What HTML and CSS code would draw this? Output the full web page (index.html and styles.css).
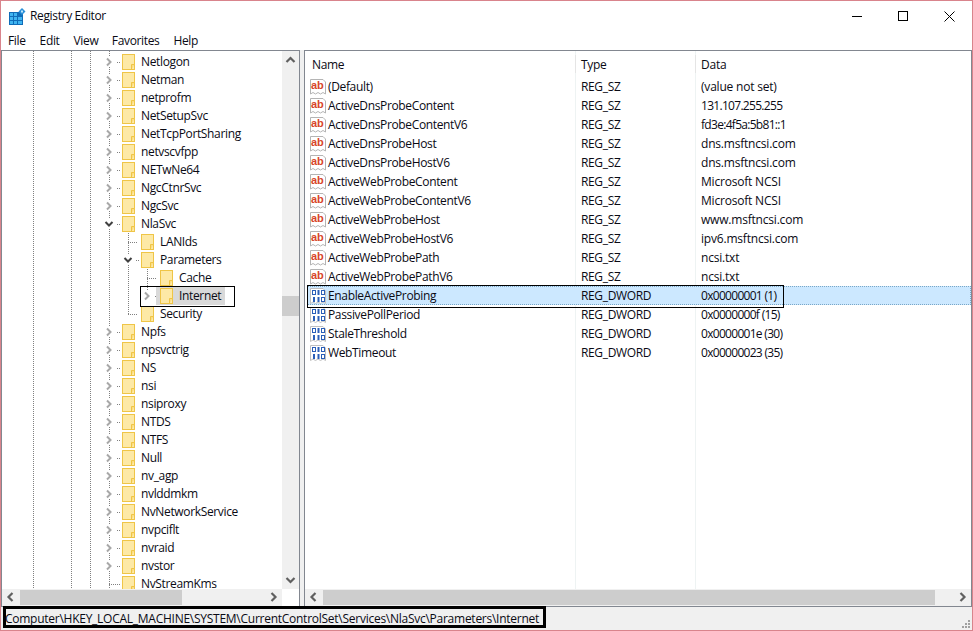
FILE: index.html
```html
<!DOCTYPE html>
<html lang="en">
<head>
<meta charset="utf-8">
<title>Registry Editor</title>
<link rel="stylesheet" href="styles.css">
</head>
<body>
<svg class="sprite" width="0" height="0" aria-hidden="true">
  <symbol id="folder" viewBox="0 0 13 16">
    <rect x="0.5" y="0.5" width="12" height="15" fill="#fde9a6" stroke="#efc547"/>
    <path d="M9.5 15.500v-5h3" fill="#fbdc80" stroke="#efc547"/>
  </symbol>
  <symbol id="tw-right" viewBox="0 0 18 18">
    <rect x="1" y="4" width="10" height="10" fill="#fff"/>
    <path d="M3 5.500l3.500 3.500-3.500 3.500" fill="none" stroke="#a8a8a8" stroke-width="2"/>
    <path d="M13 9.500h3" stroke="#808080" stroke-dasharray="1 1"/>
  </symbol>
  <symbol id="tw-down" viewBox="0 0 18 18">
    <rect x="1" y="4" width="10" height="10" fill="#fff"/>
    <path d="M1.500 7l3.500 3.500 3.500-3.500" fill="none" stroke="#404040" stroke-width="2"/>
    <path d="M13 9.500h3" stroke="#808080" stroke-dasharray="1 1"/>
  </symbol>
  <symbol id="ab" viewBox="0 0 16 18">
    <path d="M0.500 1.500h12.500l2.500 2.500v12l-2.500-1.500-2.500 1.500-2.500-1.500-2.500 1.500-2.500-1.500-2.500 1.500z" fill="#fff" stroke="#b4b4b4"/>
    <text x="1" y="11" class="abtext">ab</text>
  </symbol>
  <symbol id="bin" viewBox="0 0 16 18">
    <path d="M0.500 1.500h12.500l2.500 2.500v12.500l-2.500-1.500-2.500 1.500-2.500-1.500-2.500 1.500-2.500-1.500-2.500 1.500z" fill="#fff" stroke="#c0c0c0"/>
    <g fill="none" stroke="#2b5fb8">
      <rect x="2.500" y="3.500" width="3" height="4"/>
      <path d="M8.500 3v5" stroke-width="2"/>
      <rect x="11.500" y="3.500" width="3" height="4"/>
      <path d="M4 10v5M8.500 10v5" stroke-width="2"/>
      <rect x="11.500" y="10.500" width="3" height="4"/>
    </g>
  </symbol>
  <symbol id="arr-up" viewBox="0 0 17 17"><path d="M4.500 11l4-4 4 4" fill="none" stroke="#606060" stroke-width="2.200"/></symbol>
  <symbol id="arr-down" viewBox="0 0 17 17"><path d="M4.500 6l4 4 4-4" fill="none" stroke="#606060" stroke-width="2.200"/></symbol>
  <symbol id="arr-left" viewBox="0 0 17 17"><path d="M10.500 4l-4 4 4 4" fill="none" stroke="#606060" stroke-width="2.200"/></symbol>
  <symbol id="arr-right" viewBox="0 0 17 17"><path d="M6.500 4l4 4-4 4" fill="none" stroke="#606060" stroke-width="2.200"/></symbol>
</svg>

<div class="window">
  <header class="titlebar">
    <svg class="appicon" width="17" height="17" viewBox="0 0 17 17">
      <rect x="0" y="4" width="14" height="13" fill="#0f6cb8"/>
      <path d="M1 5h3v3H1zM5 5h3v3H5zM1 9h3v3H1zM5 9h3v3H5zM9 9h4v3H9zM1 13h3v3H1zM5 13h3v3H5zM9 13h4v3H9z" fill="#3fb4f0"/>
      <path d="M13 0l3.500 3.500L13 7 9.500 3.500z" fill="#2a8fd8"/>
      <rect x="12" y="2.500" width="2" height="2" fill="#bfe6fa"/>
    </svg>
    <span class="title">Registry Editor</span>
    <div class="controls">
      <span class="ctl"><svg width="11" height="11" viewBox="0 0 11 11"><path d="M0 5.500h10" stroke="#000" fill="none"/></svg></span>
      <span class="ctl"><svg width="11" height="11" viewBox="0 0 11 11"><rect x="0.500" y="0.500" width="9" height="9" fill="none" stroke="#000"/></svg></span>
      <span class="ctl"><svg width="11" height="11" viewBox="0 0 11 11"><path d="M0.500 0.500l10 10M10.500 0.500l-10 10" stroke="#000" fill="none"/></svg></span>
    </div>
  </header>
  <nav class="menubar">
    <span class="menu">File</span>
    <span class="menu">Edit</span>
    <span class="menu m-view">View</span>
    <span class="menu">Favorites</span>
    <span class="menu">Help</span>
  </nav>

  <main class="panes">
    <section class="pane treepane">
      <div class="tree">
        <svg class="guides" width="280" height="538" viewBox="0 0 280 538">
          <path d="M31.500 0v538M69.500 0v538M88.500 0v538M107.500 0v538M126.500 182v81M126 191.500h10M126 263.500h10M145.500 218v27M145 227.500h10M107 533.500h11" stroke="#808080" stroke-dasharray="1 1" fill="none"/>
        </svg>
        <div class="rows">
          <div class="row"><svg class="tw"><use href="#tw-right"/></svg><span class="node"><svg class="fold"><use href="#folder"/></svg><span class="lbl">Netlogon</span></span></div>
          <div class="row"><svg class="tw"><use href="#tw-right"/></svg><span class="node"><svg class="fold"><use href="#folder"/></svg><span class="lbl">Netman</span></span></div>
          <div class="row"><svg class="tw"><use href="#tw-right"/></svg><span class="node"><svg class="fold"><use href="#folder"/></svg><span class="lbl">netprofm</span></span></div>
          <div class="row"><svg class="tw"><use href="#tw-right"/></svg><span class="node"><svg class="fold"><use href="#folder"/></svg><span class="lbl">NetSetupSvc</span></span></div>
          <div class="row"><svg class="tw"><use href="#tw-right"/></svg><span class="node"><svg class="fold"><use href="#folder"/></svg><span class="lbl">NetTcpPortSharing</span></span></div>
          <div class="row"><svg class="tw"><use href="#tw-right"/></svg><span class="node"><svg class="fold"><use href="#folder"/></svg><span class="lbl">netvscvfpp</span></span></div>
          <div class="row"><svg class="tw"><use href="#tw-right"/></svg><span class="node"><svg class="fold"><use href="#folder"/></svg><span class="lbl">NETwNe64</span></span></div>
          <div class="row"><svg class="tw"><use href="#tw-right"/></svg><span class="node"><svg class="fold"><use href="#folder"/></svg><span class="lbl">NgcCtnrSvc</span></span></div>
          <div class="row"><svg class="tw"><use href="#tw-right"/></svg><span class="node"><svg class="fold"><use href="#folder"/></svg><span class="lbl">NgcSvc</span></span></div>
          <div class="row"><svg class="tw"><use href="#tw-down"/></svg><span class="node"><svg class="fold"><use href="#folder"/></svg><span class="lbl">NlaSvc</span></span></div>
          <div class="row l2"><span class="tw"></span><span class="node"><svg class="fold"><use href="#folder"/></svg><span class="lbl">LANIds</span></span></div>
          <div class="row l2"><svg class="tw"><use href="#tw-down"/></svg><span class="node"><svg class="fold"><use href="#folder"/></svg><span class="lbl">Parameters</span></span></div>
          <div class="row l3"><span class="tw"></span><span class="node"><svg class="fold"><use href="#folder"/></svg><span class="lbl">Cache</span></span></div>
          <div class="row l3 current"><svg class="tw"><use href="#tw-right"/></svg><span class="node sel"><svg class="fold"><use href="#folder"/></svg><span class="lbl">Internet</span></span></div>
          <div class="row l2"><span class="tw"></span><span class="node"><svg class="fold"><use href="#folder"/></svg><span class="lbl">Security</span></span></div>
          <div class="row"><svg class="tw"><use href="#tw-right"/></svg><span class="node"><svg class="fold"><use href="#folder"/></svg><span class="lbl">Npfs</span></span></div>
          <div class="row"><svg class="tw"><use href="#tw-right"/></svg><span class="node"><svg class="fold"><use href="#folder"/></svg><span class="lbl">npsvctrig</span></span></div>
          <div class="row"><svg class="tw"><use href="#tw-right"/></svg><span class="node"><svg class="fold"><use href="#folder"/></svg><span class="lbl">NS</span></span></div>
          <div class="row"><svg class="tw"><use href="#tw-right"/></svg><span class="node"><svg class="fold"><use href="#folder"/></svg><span class="lbl">nsi</span></span></div>
          <div class="row"><svg class="tw"><use href="#tw-right"/></svg><span class="node"><svg class="fold"><use href="#folder"/></svg><span class="lbl">nsiproxy</span></span></div>
          <div class="row"><svg class="tw"><use href="#tw-right"/></svg><span class="node"><svg class="fold"><use href="#folder"/></svg><span class="lbl">NTDS</span></span></div>
          <div class="row"><svg class="tw"><use href="#tw-right"/></svg><span class="node"><svg class="fold"><use href="#folder"/></svg><span class="lbl">NTFS</span></span></div>
          <div class="row"><svg class="tw"><use href="#tw-right"/></svg><span class="node"><svg class="fold"><use href="#folder"/></svg><span class="lbl">Null</span></span></div>
          <div class="row"><svg class="tw"><use href="#tw-right"/></svg><span class="node"><svg class="fold"><use href="#folder"/></svg><span class="lbl">nv_agp</span></span></div>
          <div class="row"><svg class="tw"><use href="#tw-right"/></svg><span class="node"><svg class="fold"><use href="#folder"/></svg><span class="lbl">nvlddmkm</span></span></div>
          <div class="row"><svg class="tw"><use href="#tw-right"/></svg><span class="node"><svg class="fold"><use href="#folder"/></svg><span class="lbl">NvNetworkService</span></span></div>
          <div class="row"><svg class="tw"><use href="#tw-right"/></svg><span class="node"><svg class="fold"><use href="#folder"/></svg><span class="lbl">nvpciflt</span></span></div>
          <div class="row"><svg class="tw"><use href="#tw-right"/></svg><span class="node"><svg class="fold"><use href="#folder"/></svg><span class="lbl">nvraid</span></span></div>
          <div class="row"><svg class="tw"><use href="#tw-right"/></svg><span class="node"><svg class="fold"><use href="#folder"/></svg><span class="lbl">nvstor</span></span></div>
          <div class="row"><span class="tw"></span><span class="node"><svg class="fold"><use href="#folder"/></svg><span class="lbl">NvStreamKms</span></span></div>
        </div>
      </div>
      <div class="vbar">
        <svg class="arr"><use href="#arr-up"/></svg>
        <div class="vtrack"><div class="vthumb"></div></div>
        <svg class="arr"><use href="#arr-down"/></svg>
      </div>
      <div class="hbar">
        <svg class="arr"><use href="#arr-left"/></svg>
        <div class="htrack"><div class="hthumb tree-thumb"></div></div>
        <svg class="arr"><use href="#arr-right"/></svg>
      </div>
      <div class="corner"></div>
    </section>

    <section class="pane listpane">
      <div class="list">
        <div class="lhead">
          <span class="col-name head-name">Name</span>
          <span class="col-type">Type</span>
          <span class="col-data">Data</span>
        </div>
        <div class="lrow"><span class="col-name"><svg class="ic"><use href="#ab"/></svg>(Default)</span><span class="col-type">REG_SZ</span><span class="col-data">(value not set)</span></div>
        <div class="lrow"><span class="col-name"><svg class="ic"><use href="#ab"/></svg>ActiveDnsProbeContent</span><span class="col-type">REG_SZ</span><span class="col-data num">131.107.255.255</span></div>
        <div class="lrow"><span class="col-name"><svg class="ic"><use href="#ab"/></svg>ActiveDnsProbeContentV6</span><span class="col-type">REG_SZ</span><span class="col-data num">fd3e:4f5a:5b81::1</span></div>
        <div class="lrow"><span class="col-name"><svg class="ic"><use href="#ab"/></svg>ActiveDnsProbeHost</span><span class="col-type">REG_SZ</span><span class="col-data">dns.msftncsi.com</span></div>
        <div class="lrow"><span class="col-name"><svg class="ic"><use href="#ab"/></svg>ActiveDnsProbeHostV6</span><span class="col-type">REG_SZ</span><span class="col-data">dns.msftncsi.com</span></div>
        <div class="lrow"><span class="col-name"><svg class="ic"><use href="#ab"/></svg>ActiveWebProbeContent</span><span class="col-type">REG_SZ</span><span class="col-data">Microsoft NCSI</span></div>
        <div class="lrow"><span class="col-name"><svg class="ic"><use href="#ab"/></svg>ActiveWebProbeContentV6</span><span class="col-type">REG_SZ</span><span class="col-data">Microsoft NCSI</span></div>
        <div class="lrow"><span class="col-name"><svg class="ic"><use href="#ab"/></svg>ActiveWebProbeHost</span><span class="col-type">REG_SZ</span><span class="col-data">www.msftncsi.com</span></div>
        <div class="lrow"><span class="col-name"><svg class="ic"><use href="#ab"/></svg>ActiveWebProbeHostV6</span><span class="col-type">REG_SZ</span><span class="col-data">ipv6.msftncsi.com</span></div>
        <div class="lrow"><span class="col-name"><svg class="ic"><use href="#ab"/></svg>ActiveWebProbePath</span><span class="col-type">REG_SZ</span><span class="col-data">ncsi.txt</span></div>
        <div class="lrow"><span class="col-name"><svg class="ic"><use href="#ab"/></svg>ActiveWebProbePathV6</span><span class="col-type">REG_SZ</span><span class="col-data">ncsi.txt</span></div>
        <div class="lrow selected"><span class="col-name"><svg class="ic"><use href="#bin"/></svg>EnableActiveProbing</span><span class="col-type">REG_DWORD</span><span class="col-data num">0x00000001 (1)</span></div>
        <div class="lrow"><span class="col-name"><svg class="ic"><use href="#bin"/></svg>PassivePollPeriod</span><span class="col-type">REG_DWORD</span><span class="col-data num">0x0000000f (15)</span></div>
        <div class="lrow"><span class="col-name"><svg class="ic"><use href="#bin"/></svg>StaleThreshold</span><span class="col-type">REG_DWORD</span><span class="col-data num">0x0000001e (30)</span></div>
        <div class="lrow"><span class="col-name"><svg class="ic"><use href="#bin"/></svg>WebTimeout</span><span class="col-type">REG_DWORD</span><span class="col-data num">0x00000023 (35)</span></div>
      </div>
      <div class="hbar">
        <svg class="arr"><use href="#arr-left"/></svg>
        <div class="htrack"><div class="hthumb list-thumb"></div></div>
        <svg class="arr"><use href="#arr-right"/></svg>
      </div>
    </section>
  </main>

  <footer class="statusbar">
    <span class="path">Computer\HKEY_LOCAL_MACHINE\SYSTEM\CurrentControlSet\Services\NlaSvc\Parameters\Internet</span>
    <svg class="grip" width="9" height="9" viewBox="0 0 9 9"><path d="M6 0h2v2H6zM3 3h2v2H3zM6 3h2v2H6zM0 6h2v2H0zM3 6h2v2H3zM6 6h2v2H6z" fill="#a0a0a0"/></svg>
  </footer>
</div>
</body>
</html>
```
FILE: styles.css
```css
* { box-sizing: border-box; }
html, body { margin: 0; padding: 0; }
body {
  width: 973px;
  height: 631px;
  overflow: hidden;
  font-family: "Open Sans", "Noto Sans", sans-serif;
  font-size: 12px;
  letter-spacing: -0.35px;
  color: #0a0a14;
  background: #fff;
}
.sprite { display: none; }
.abtext { font-family: "Liberation Sans", sans-serif; font-size: 11px; font-weight: 700; letter-spacing: 0; fill: #d8452a; }

.window {
  width: 973px;
  height: 631px;
  border: 1px solid #d9848c;
  display: flex;
  flex-direction: column;
  background: #fff;
}

.titlebar { height: 30px; display: flex; align-items: center; padding-left: 8px; }
.appicon { flex: none; }
.title { margin-left: 4px; margin-bottom: 2px; }
.controls { margin-left: auto; display: flex; }
.ctl { width: 46px; height: 30px; display: flex; align-items: center; justify-content: center; }

.menubar { height: 19px; display: flex; align-items: center; padding-left: 7px; }
.menu { margin-right: 14px; }
.m-view { margin-right: 13.500px; }

.panes { height: 557px; display: flex; gap: 4px; background: #f0f0f0; }
.pane { border: 1px solid #828790; background: #fff; }

.treepane {
  width: 299px;
  display: grid;
  grid-template-columns: 280px 17px;
  grid-template-rows: 538px 17px;
}
.tree { position: relative; overflow: hidden; }
.guides { position: absolute; left: 0; top: 0; }
.rows { position: relative; padding-top: 2px; }
.row { height: 18px; display: flex; align-items: center; padding-left: 102px; white-space: nowrap; }
.row.l2 { padding-left: 121px; }
.row.l3 { padding-left: 140px; }
.tw { width: 18px; height: 18px; flex: none; display: block; }
.node { display: flex; align-items: center; height: 18px; }
.fold { width: 13px; height: 16px; flex: none; }
.lbl { margin-left: 6px; margin-bottom: 1px; }
.node.sel { background: #d9d9d9; margin-left: -4px; padding-left: 4px; padding-right: 4px; }
.current { position: relative; }
.current::after {
  content: "";
  position: absolute;
  left: 138px;
  top: -1px;
  width: 93px;
  height: 19px;
  border: 1px solid #000;
}

.vbar { display: flex; flex-direction: column; background: #f0f0f0; }
.hbar { display: flex; background: #f0f0f0; }
.corner { background: #fff; }
.arr { width: 17px; height: 17px; flex: none; display: block; }
.vtrack { flex: 1; }
.vthumb { margin-top: 228px; height: 20px; background: #cdcdcd; }
.htrack { flex: 1; padding: 1px 0; display: flex; }
.hthumb { background: #cdcdcd; height: 15px; }
.tree-thumb { width: 162px; margin-left: 1px; }
.list-thumb { width: 612px; margin-left: 1px; }

.listpane { flex: 1; display: grid; grid-template-rows: 538px 17px; }
.list {
  overflow: hidden;
  background:
    linear-gradient(#eef3f3, #eef3f3) no-repeat 270px 0 / 1px 100%,
    linear-gradient(#eef3f3, #eef3f3) no-repeat 390px 0 / 1px 100%;
}
.lhead { height: 26px; display: flex; align-items: center; }
.lhead .col-name { padding-left: 7px; }
.lhead .col-name, .lhead .col-type { border-right: 1px solid #e5e5e5; height: 18px; display: flex; align-items: center; }
.col-name { width: 271px; flex: none; display: flex; align-items: center; }
.col-type { width: 120px; flex: none; padding-left: 5px; }
.col-data { padding-left: 5px; letter-spacing: -0.2px; }
.col-data.num { letter-spacing: -0.7px; }
.lrow { height: 19px; display: flex; align-items: center; margin-left: 2px; white-space: nowrap; }
.lrow .col-name { width: 269px; padding-left: 3px; }
.ic { width: 16px; height: 18px; flex: none; margin-right: 2px; }
.selected { position: relative; background: #cce8ff; outline: 1px dotted #7aa7c7; outline-offset: -1px; }
.selected::after {
  content: "";
  position: absolute;
  left: 0;
  top: -1px;
  width: 475px;
  height: 21px;
  border: 1px solid #000;
}

.statusbar { height: 23px; display: flex; align-items: flex-start; background: #f0f0f0; position: relative; }
.path {
  display: block;
  margin-left: 2px;
  margin-top: -1px;
  height: 22px;
  width: 543px;
  border: 3px solid #000;
  line-height: 20px;
  letter-spacing: -0.26px;
  text-indent: -1px;
  white-space: nowrap;
  color: #0a0a14;
}
.grip { position: absolute; right: 1px; bottom: 1px; }
```
